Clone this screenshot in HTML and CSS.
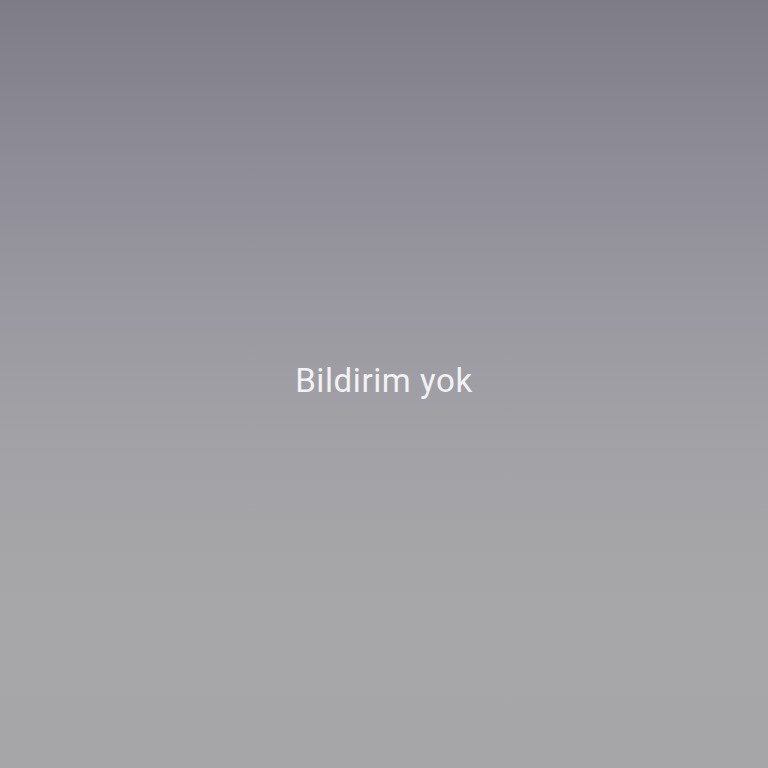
FILE: index.html
```html
<!DOCTYPE html>
<html lang="tr">
<head>
<meta charset="utf-8">
<title>Bildirim yok</title>
<link rel="stylesheet" href="styles.css">
</head>
<body>
<main class="screen">
  <p class="empty">Bildirim yok</p>
</main>
</body>
</html>
```
FILE: styles.css
```css
html, body {
  margin: 0;
  padding: 0;
  height: 100%;
}
body {
  background: linear-gradient(to bottom, #7e7c87 0%, #8c8a95 18%, #9a99a1 40%, #a3a3a7 60%, #a7a7a9 80%, #a6a6a8 100%);
  font-family: Roboto, "Noto Sans", sans-serif;
}
.screen {
  height: 100vh;
  display: flex;
  align-items: center;
  justify-content: center;
}
.empty {
  margin: 0 0 8px 0;
  color: #f2f2f4;
  font-size: 33px;
  font-weight: 400;
  letter-spacing: 0.6px;
}
```
